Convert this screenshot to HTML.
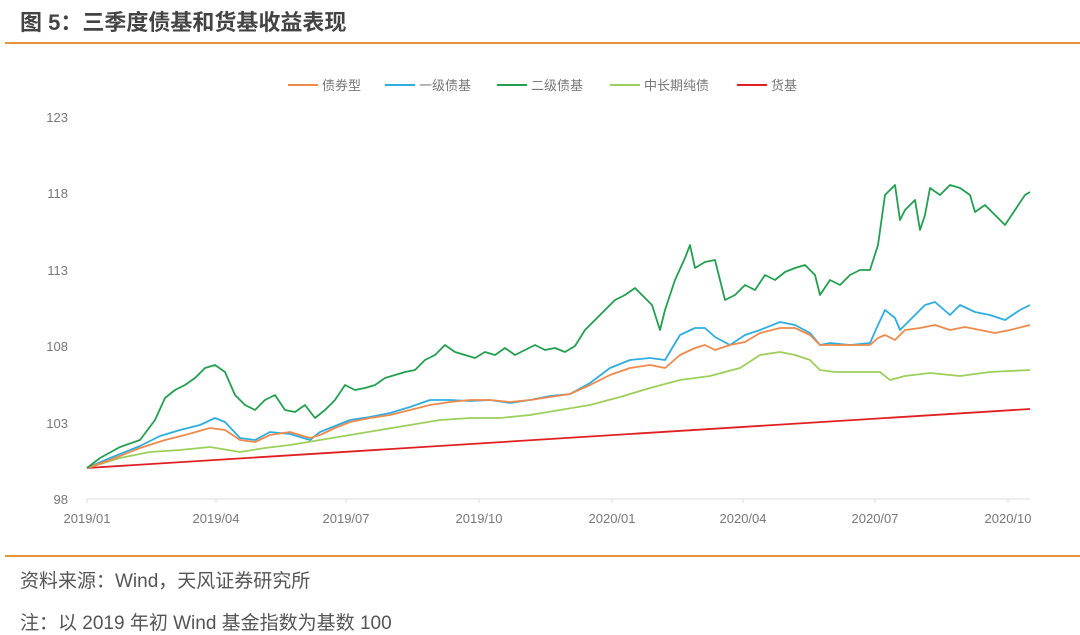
<!DOCTYPE html>
<html><head><meta charset="utf-8"><style>
body{margin:0;background:#fff;width:1080px;height:635px;overflow:hidden;font-family:"Liberation Sans","Noto Sans CJK SC",sans-serif;}
.t{position:absolute;left:20px;top:5px;font-size:22px;font-weight:bold;color:#444;}
.hr{position:absolute;left:5px;width:1075px;height:2px;background:#e8923a;}
.n{position:absolute;left:20px;font-size:19px;color:#555;}
svg{position:absolute;left:0;top:0}
svg text{font-family:"Liberation Sans","Noto Sans CJK SC",sans-serif;fill:#777;font-size:13px}
</style></head><body>
<div class="t">图 5：三季度债基和货基收益表现</div>
<div class="hr" style="top:42px"></div>
<div class="hr" style="top:555px"></div>
<div class="n" style="top:566px">资料来源：Wind，天风证券研究所</div>
<div class="n" style="top:608px">注：以 2019 年初 Wind 基金指数为基数 100</div>
<svg width="1080" height="635">
<g font-size="13">
<line x1="288" y1="85" x2="318" y2="85" stroke="#ed8a4c" stroke-width="2"/><text x="322" y="90">债券型</text>
<line x1="385" y1="85" x2="415" y2="85" stroke="#2eaee0" stroke-width="2"/><text x="419" y="90">一级债基</text>
<line x1="497" y1="85" x2="527" y2="85" stroke="#22a050" stroke-width="2"/><text x="531" y="90">二级债基</text>
<line x1="610" y1="85" x2="640" y2="85" stroke="#9ccf5c" stroke-width="2"/><text x="644" y="90">中长期纯债</text>
<line x1="737" y1="85" x2="767" y2="85" stroke="#e02020" stroke-width="2"/><text x="771" y="90">货基</text>
</g>
<g text-anchor="end"><text x="68" y="122">123</text><text x="68" y="198">118</text><text x="68" y="275">113</text><text x="68" y="351">108</text><text x="68" y="428">103</text><text x="68" y="504">98</text></g>
<line x1="86" y1="499" x2="1030" y2="499" stroke="#ddd"/>
<g stroke="#ddd"><line x1="87" y1="499" x2="87" y2="503"/><line x1="216" y1="499" x2="216" y2="503"/><line x1="346" y1="499" x2="346" y2="503"/><line x1="479" y1="499" x2="479" y2="503"/><line x1="612" y1="499" x2="612" y2="503"/><line x1="743" y1="499" x2="743" y2="503"/><line x1="875" y1="499" x2="875" y2="503"/><line x1="1008" y1="499" x2="1008" y2="503"/></g>
<g text-anchor="middle"><text x="87" y="523">2019/01</text><text x="216" y="523">2019/04</text><text x="346" y="523">2019/07</text><text x="479" y="523">2019/10</text><text x="612" y="523">2020/01</text><text x="743" y="523">2020/04</text><text x="875" y="523">2020/07</text><text x="1008" y="523">2020/10</text></g>
<g fill="none" stroke-width="1.8" stroke-linejoin="round">
<polyline stroke="#e02020" points="87,468 1030,409"/>
<polyline stroke="#9ccf5c" points="87,468 120,458 150,452 180,450 210,447 240,452 265,448 290,445 320,440 350,435 380,430 410,425 440,420 470,418 500,418 530,415 560,410 590,405 620,397 650,388 680,380 710,376 740,368 760,355 780,352 795,355 810,360 820,370 835,372 860,372 880,372 890,380 905,376 930,373 960,376 990,372 1030,370"/>
<polyline stroke="#2eaee0" points="87,468 110,458 140,446 160,436 180,430 200,425 215,418 225,422 240,438 255,440 270,432 290,434 310,440 320,432 335,426 350,420 370,417 390,413 410,407 430,400 450,400 470,401 490,400 510,403 530,400 550,396 570,394 590,383 610,368 630,360 650,358 665,360 680,335 695,328 705,328 715,337 730,345 745,335 760,330 780,322 795,325 810,333 820,345 830,343 850,345 870,343 878,325 885,310 895,318 900,330 910,320 925,305 935,302 950,315 960,305 975,312 990,315 1005,320 1020,310 1030,305"/>
<polyline stroke="#ed8a4c" points="87,468 110,460 140,448 165,440 185,435 210,428 225,430 240,440 255,442 270,435 290,432 310,438 320,435 335,428 350,422 370,418 390,415 410,410 430,405 450,402 470,400 490,400 510,402 530,400 550,397 570,394 590,385 610,375 630,368 650,365 665,368 680,355 695,348 705,345 715,350 730,345 745,342 760,333 780,328 795,328 810,335 820,345 830,345 850,345 870,345 878,338 885,335 895,340 905,330 920,328 935,325 950,330 965,327 980,330 995,333 1010,330 1030,325"/>
<polyline stroke="#22a050" points="87,468 100,458 120,447 140,440 155,420 165,398 175,390 185,385 195,378 205,368 215,365 225,372 235,395 245,405 255,410 265,400 275,395 285,410 295,412 305,405 315,418 325,410 335,400 345,385 355,390 365,388 375,385 385,378 395,375 405,372 415,370 425,360 435,355 445,345 455,352 465,355 475,358 485,352 495,355 505,348 515,355 525,350 535,345 545,350 555,348 565,352 575,346 585,330 595,320 605,310 615,300 625,295 635,288 645,298 652,305 660,330 665,310 675,280 685,258 690,245 695,268 705,262 715,260 725,300 735,295 745,285 755,290 765,275 775,280 785,272 795,268 805,265 815,275 820,295 830,280 840,285 850,275 860,270 870,270 878,245 885,195 895,185 900,220 905,210 915,200 920,230 925,215 930,188 940,195 950,185 960,188 970,195 975,212 985,205 995,215 1005,225 1015,210 1025,195 1030,192"/>
</g>
</svg>
</body></html>
